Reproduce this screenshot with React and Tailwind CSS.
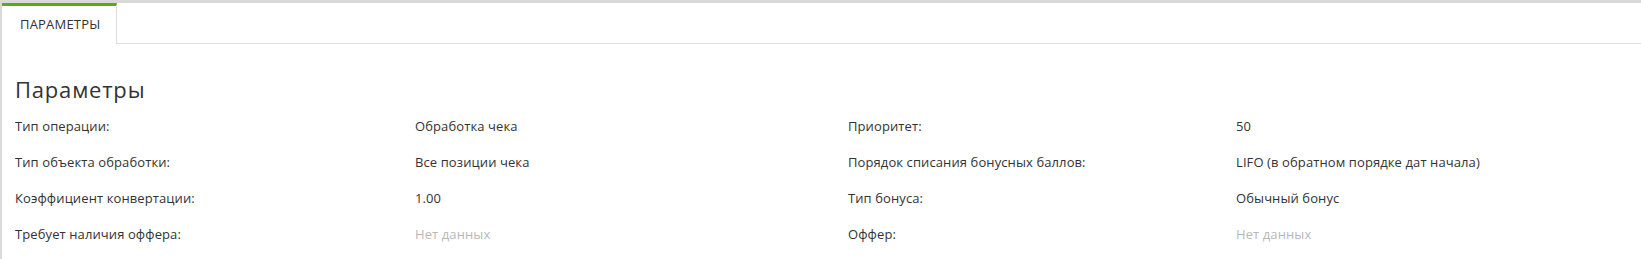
const rows = [
  ["Тип операции:", "Обработка чека", "Приоритет:", "50"],
  ["Тип объекта обработки:", "Все позиции чека", "Порядок списания бонусных баллов:", "LIFO (в обратном порядке дат начала)"],
  ["Коэффициент конвертации:", "1.00", "Тип бонуса:", "Обычный бонус"],
  ["Требует наличия оффера:", null, "Оффер:", null],
];

function Value({ children }) {
  if (children == null) return <span className="text-[#b8b8b8]">Нет данных</span>;
  return <span>{children}</span>;
}

export default function App() {
  return (
    <div
      className="h-[259px] overflow-hidden border-t-[3px] border-l-2 border-[#d9d9d9] bg-white text-[#333]"
      style={{ fontFamily: '"Open Sans", "Liberation Sans", sans-serif' }}
    >
      <div className="flex h-[41px] border-b border-[#dedede]">
        <div className="-mb-px flex w-[115px] items-center border-t-[3px] border-r border-t-[#5aab14] border-r-[#dedede] bg-white pb-px pl-[18px] text-[13px] tracking-[0.2px] uppercase">
          Параметры
        </div>
      </div>

      <div className="pl-[13px] pt-[31px]">
        <h2 className="text-[22px] leading-[28px] tracking-[0.8px]">Параметры</h2>
        <div className="mt-[13px] grid grid-cols-[400px_433px_388px_1fr] text-[13px] leading-[20px] tracking-[0.1px]">
          {rows.map(([l1, v1, l2, v2]) => (
            <div key={l1} className="contents">
              <div className="h-[36px]">{l1}</div>
              <div><Value>{v1}</Value></div>
              <div>{l2}</div>
              <div><Value>{v2}</Value></div>
            </div>
          ))}
        </div>
      </div>
    </div>
  );
}
